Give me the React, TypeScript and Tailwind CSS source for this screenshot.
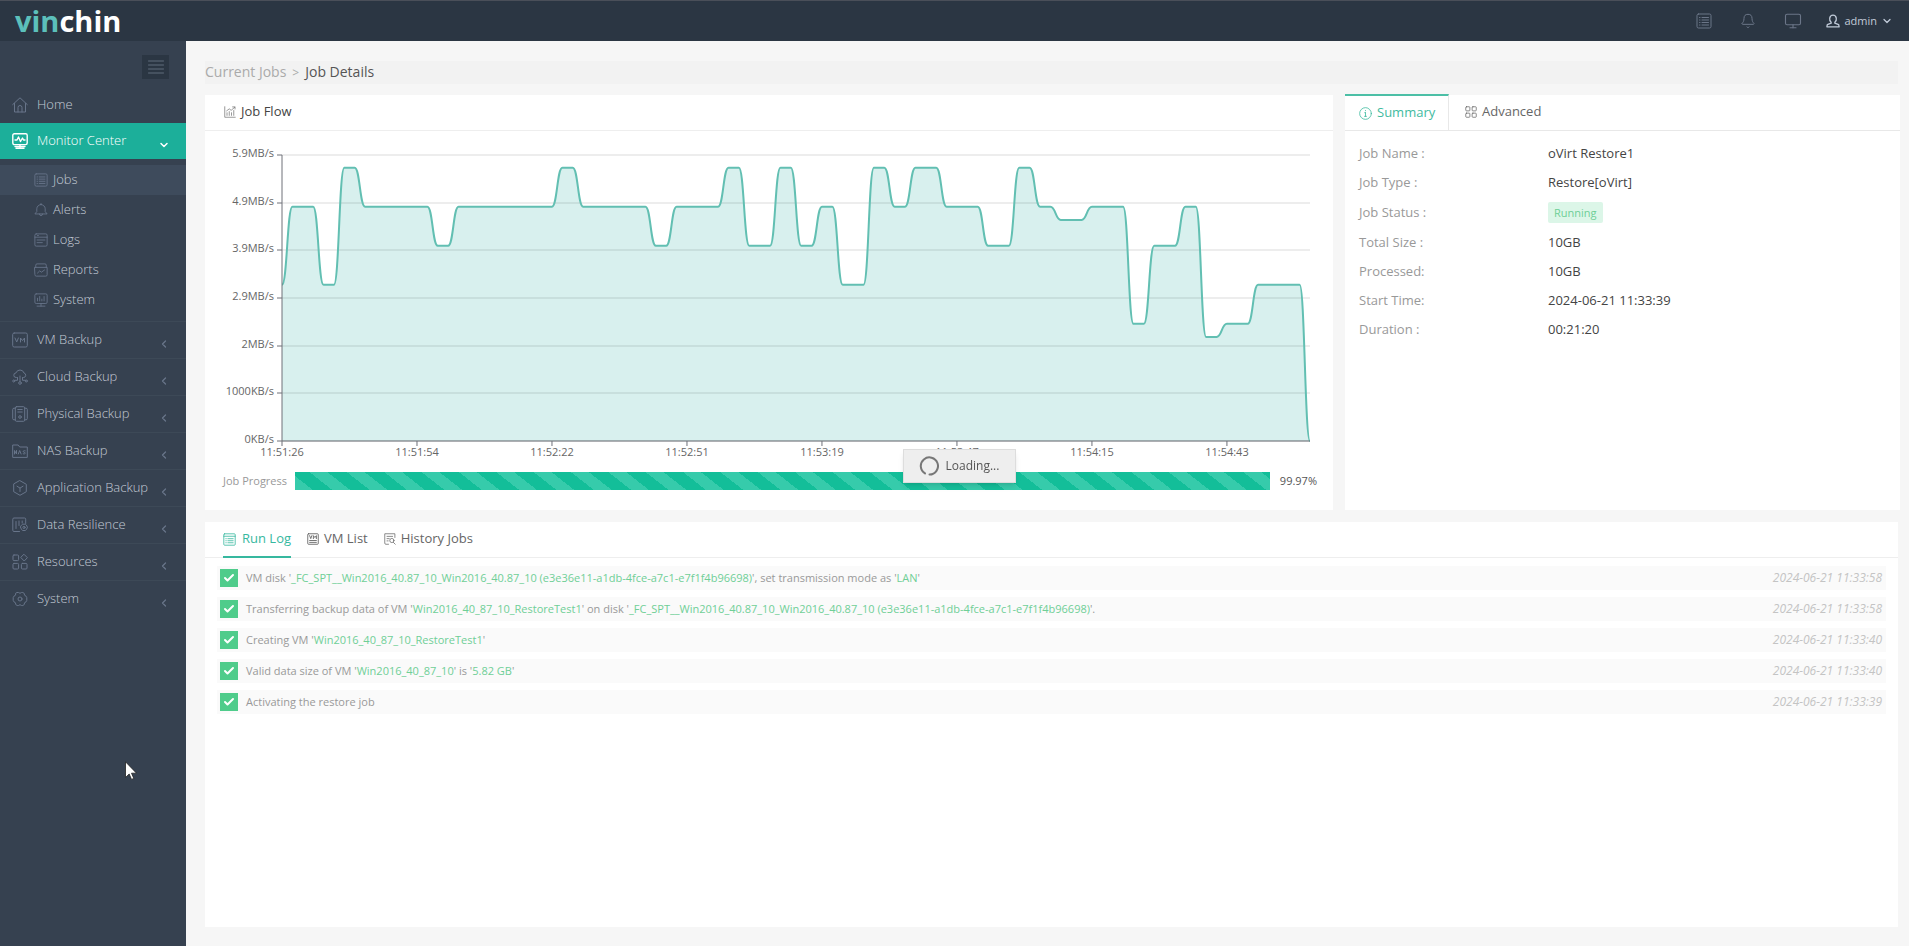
import { FC, ReactNode, SVGProps } from "react";
import { Bell, Check, ChevronDown, ChevronLeft, Monitor } from "lucide-react";

type IconProps = { className?: string };

const Svg: FC<SVGProps<SVGSVGElement>> = ({ children, ...props }) => (
  <svg
    viewBox="0 0 16 16"
    fill="none"
    stroke="currentColor"
    strokeLinecap="round"
    strokeLinejoin="round"
    aria-hidden="true"
    {...props}
  >
    {children}
  </svg>
);

const HomeIcon: FC<IconProps> = ({ className }) => (
  <Svg className={className}>
    <path d="M.7 7.600 8 .8l7.300 6.800M2.500 6.500V15h11V6.500M6 15v-4.500a2 2 0 0 1 4 0V15" />
  </Svg>
);

const MonitorCenterIcon: FC<IconProps> = ({ className }) => (
  <Svg className={className} strokeWidth="1.400">
    <rect x=".8" y=".8" width="14.400" height="10.800" rx="1.500" />
    <path d="M3 7h2l1.500-3 2 4.500L10.500 5l1 2H13M8 11.600V14M3 13.500h10M4 15.200h8" />
  </Svg>
);

const ListIcon: FC<IconProps> = ({ className }) => (
  <Svg className={className}>
    <rect x="1" y="1" width="14" height="14" rx="1.500" />
    <path d="M3.500 4.500h.5M6 4.500h6.500M3.500 7h.5M6 7h6.500M3.500 9.500h.5M6 9.500h6.500M3.500 12h.5M6 12h6.500" />
  </Svg>
);

const AlertIcon: FC<IconProps> = ({ className }) => (
  <Svg className={className}>
    <path d="M8 1.800a4.800 4.800 0 0 0-4.800 4.800v3.200L1 12.500h14l-2.200-2.700V6.600A4.800 4.800 0 0 0 8 1.800ZM8 .6v1.200M6.200 12.600a1.800 1.800 0 0 0 3.600 0" />
  </Svg>
);

const LogIcon: FC<IconProps> = ({ className }) => (
  <Svg className={className}>
    <rect x="1" y="1" width="14" height="14" rx="1.500" />
    <path d="M1 4.800h14M4 2.900h1M3.500 8h9M3.500 11h6" />
  </Svg>
);

const ReportIcon: FC<IconProps> = ({ className }) => (
  <Svg className={className}>
    <path d="M1 5h14v8.500a1.500 1.500 0 0 1-1.500 1.500h-11A1.500 1.500 0 0 1 1 13.500ZM2 5V2.500A1.500 1.500 0 0 1 3.500 1h9A1.500 1.500 0 0 1 14 2.500V5M4 11.500 6.500 9l2 1.500L12 8" />
  </Svg>
);

const SystemMonitorIcon: FC<IconProps> = ({ className }) => (
  <Svg className={className}>
    <rect x="1" y="1" width="14" height="11" rx="1.500" />
    <path d="M4 9V6M6.500 9V4M9 9V7M11.500 9V4M8 12v3M3.500 15h9" />
  </Svg>
);

const VmIcon: FC<IconProps> = ({ className }) => (
  <Svg className={className}>
    <rect x=".7" y="1" width="14.600" height="14" rx="1.500" />
    <path d="m3 6 1.700 4L6.400 6M8.500 10V6l2 2.600 2-2.600v4" />
  </Svg>
);

const CloudIcon: FC<IconProps> = ({ className }) => (
  <Svg className={className}>
    <path d="M4.500 8.500H4.200a2.300 2.300 0 0 1-.2-4.600A4.200 4.200 0 0 1 12 4a2.300 2.300 0 0 1-.2 4.500h-.3M8 7v5.500M5.500 8.500v2.800H2.800M10.500 8.500v2.800h2.700" />
    <circle cx="8" cy="14" r="1.300" />
    <circle cx="1.700" cy="12" r="1" />
    <circle cx="14.300" cy="12" r="1" />
  </Svg>
);

const PhysicalIcon: FC<IconProps> = ({ className }) => (
  <Svg className={className}>
    <rect x="3.300" y=".7" width="9.400" height="14.600" rx="1.200" />
    <path d="M3.300 2.200H2A1.300 1.300 0 0 0 .7 3.500v9A1.300 1.300 0 0 0 2 13.800h1.300M12.700 2.200H14a1.300 1.300 0 0 1 1.300 1.300v9a1.300 1.300 0 0 1-1.300 1.300h-1.300M5.800 3.500h4.400M5.800 6h4.400" />
    <circle cx="8" cy="11" r="1.300" />
  </Svg>
);

const NasIcon: FC<IconProps> = ({ className }) => (
  <Svg className={className}>
    <path d="M.7 14V2h5.500l1.500 2h7.600v10Z" />
    <path d="M2.500 11V7.500l2 3.500V7.500M6.300 11 7.700 7.500 9.100 11M13.200 7.800c-2.500-.8-2.500 1.400-1 1.500 2 .2 1.300 2.300-1 1.500" />
  </Svg>
);

const AppIcon: FC<IconProps> = ({ className }) => (
  <Svg className={className}>
    <path d="m8 .7 6.300 3.600v7.400L8 15.300l-6.300-3.600V4.300ZM5 6.200l3 1.900 3-1.900M8 8.100v3.400" />
  </Svg>
);

const ResilienceIcon: FC<IconProps> = ({ className }) => (
  <Svg className={className}>
    <path d="M7.500 14.500H2A1.200 1.200 0 0 1 .8 13.300V2.200A1.200 1.200 0 0 1 2 1h10.500a1.200 1.200 0 0 1 1.200 1.200V6.500M4 4.500v7M7 4v4.500M10.200 4v2" />
    <path d="m9.700 8 1-.8h2.600l1 .8 1.200 2.300-1.200 2.400-1 .8h-2.600l-1-.8-1.200-2.400Z" />
    <circle cx="12" cy="10.400" r="1.100" />
  </Svg>
);

const ResourcesIcon: FC<IconProps> = ({ className }) => (
  <Svg className={className}>
    <rect x="1" y="1" width="5.600" height="5.600" rx="1" />
    <rect x="9.400" y="9.400" width="5.600" height="5.600" rx="1" />
    <rect x="1" y="9.400" width="5.600" height="5.600" rx="1" />
    <path d="m12.200.5 3.200 3.200L12.200 7 9 3.700Z" />
  </Svg>
);

const GearIcon: FC<IconProps> = ({ className }) => (
  <Svg className={className}>
    <path d="M5.200 1.500h1.300L8 2.300l1.500-.8h1.300l1.500 1 .2 1.700 1.500.9.800 1.500v2.800l-.8 1.500-1.500.9-.2 1.700-1.500 1H9.500L8 13.700l-1.500.8H5.200l-1.500-1-.2-1.700-1.500-.9-.8-1.500V6.600L2 5.100l1.500-.9.200-1.700Z" />
    <circle cx="8" cy="8" r="2" />
  </Svg>
);

const UserIcon: FC<IconProps> = ({ className }) => (
  <Svg className={className} strokeWidth="1.500">
    <path d="M5.900 9.500C3.200 7.500 3.500 1.200 8 1.200s4.800 6.300 2.100 8.300v1l4.400 1.700.5 2.500H1l.5-2.500 4.400-1.700Z" />
  </Svg>
);

const FlowIcon: FC<IconProps> = ({ className }) => (
  <Svg className={className}>
    <path d="M1 1v14h14M4 12.500V9M7 12.500V7.500M10 12.500V9M13 12.500V6M3.500 6.500 7 3.800l2.500 2L14.500 1.500M11.500 1.200h3.200V4" />
  </Svg>
);

const InfoIcon: FC<IconProps> = ({ className }) => (
  <Svg className={className}>
    <circle cx="8" cy="8" r="7.200" />
    <path d="M8 7v4.500M7 7h1M6.800 11.500h2.400M8 4.300v.3" />
  </Svg>
);

const GridIcon: FC<IconProps> = ({ className }) => (
  <Svg className={className}>
    <rect x="1" y="1" width="5.500" height="5.500" rx="1" />
    <rect x="9.500" y="1" width="5.500" height="5.500" rx="1" />
    <rect x="1" y="9.500" width="5.500" height="5.500" rx="1" />
    <rect x="9.500" y="9.500" width="5.500" height="5.500" rx="1" />
  </Svg>
);

const RunLogIcon: FC<IconProps> = ({ className }) => (
  <Svg className={className}>
    <rect x="1" y="1" width="14" height="14" rx="1" />
    <path d="M1 4h14M3.500 7h.5M6 7h6.500M3.500 9.500h.5M6 9.500h6.500M3.500 12h.5M6 12h6.500" />
  </Svg>
);

const VmListIcon: FC<IconProps> = ({ className }) => (
  <Svg className={className} strokeWidth="1.200">
    <rect x="1" y="1" width="14" height="14" rx="1" />
    <path d="m3.500 3.500 1.500 4 1.500-4M8.500 7.500v-4l2 2.500 2-2.500v4M3.500 10h9M3.500 12.500h9" />
  </Svg>
);

const HistoryIcon: FC<IconProps> = ({ className }) => (
  <Svg className={className}>
    <path d="M6 15H2.500A1.500 1.500 0 0 1 1 13.500V1h13.500v5M4 4.500h7.500M4 7.500h3M4 10.500h1.500M12.500 12.500l2.500 2.500" />
    <circle cx="10.500" cy="10" r="2.800" />
  </Svg>
);

type MenuItem = { label: string; icon: FC<IconProps> };

const MONITOR_ITEMS: MenuItem[] = [
  { label: "Jobs", icon: ListIcon },
  { label: "Alerts", icon: AlertIcon },
  { label: "Logs", icon: LogIcon },
  { label: "Reports", icon: ReportIcon },
  { label: "System", icon: SystemMonitorIcon },
];

const MENU_ITEMS: MenuItem[] = [
  { label: "VM Backup", icon: VmIcon },
  { label: "Cloud Backup", icon: CloudIcon },
  { label: "Physical Backup", icon: PhysicalIcon },
  { label: "NAS Backup", icon: NasIcon },
  { label: "Application Backup", icon: AppIcon },
  { label: "Data Resilience", icon: ResilienceIcon },
  { label: "Resources", icon: ResourcesIcon },
  { label: "System", icon: GearIcon },
];

// [last sample index of the run, speed in MB/s]
const FLOW_RUNS: [number, number][] = [
  [0, 3.2], [3, 4.8], [5, 3.2], [7, 5.6], [14, 4.8], [16, 4], [26, 4.8], [28, 5.6],
  [35, 4.8], [37, 4], [42, 4.8], [44, 5.6], [47, 4], [49, 5.6], [51, 4], [53, 4.8],
  [56, 3.2], [58, 5.6], [60, 4.8], [63, 5.6], [67, 4.8], [70, 4], [72, 5.6], [74, 4.8],
  [77, 4.53], [81, 4.8], [83, 2.4], [86, 4], [88, 4.8], [90, 2.13], [93, 2.4], [98, 3.2],
  [99, 0],
];
const SAMPLES = 99;
const MAX_SPEED = 5.86;
const PLOT_HEIGHT = 286;

const Y_LABELS = ["5.9MB/s", "4.9MB/s", "3.9MB/s", "2.9MB/s", "2MB/s", "1000KB/s", "0KB/s"];
const X_LABELS = [
  "11:51:26", "11:51:54", "11:52:22", "11:52:51", "11:53:19", "11:53:47", "11:54:15", "11:54:43",
];

const toY = (speed: number) => PLOT_HEIGHT * (1 - speed / MAX_SPEED);

const flowPath = FLOW_RUNS.reduce((path, [end, speed], i) => {
  const y = toY(speed);
  if (i === 0) return `M0 ${y}`;
  const [prevEnd, prevSpeed] = FLOW_RUNS[i - 1];
  const mid = prevEnd + 0.5;
  return `${path} C${mid} ${toY(prevSpeed)} ${mid} ${y} ${prevEnd + 1} ${y} H${end}`;
}, "");

const SUMMARY = [
  ["Job Name :", "oVirt Restore1"],
  ["Job Type :", "Restore[oVirt]"],
  ["Job Status :", "Running"],
  ["Total Size :", "10GB"],
  ["Processed:", "10GB"],
  ["Start Time:", "2024-06-21 11:33:39"],
  ["Duration :", "00:21:20"],
];

const Mark: FC<{ children: ReactNode }> = ({ children }) => (
  <span className="text-[#6fcf97]">{children}</span>
);

const DISK = "_FC_SPT__Win2016_40.87_10_Win2016_40.87_10 (e3e36e11-a1db-4fce-a7c1-e7f1f4b96698)";

const LOGS: { message: ReactNode; time: string }[] = [
  {
    message: <>VM disk '<Mark>{DISK}</Mark>', set transmission mode as '<Mark>LAN</Mark>'</>,
    time: "2024-06-21 11:33:58",
  },
  {
    message: (
      <>Transferring backup data of VM '<Mark>Win2016_40_87_10_RestoreTest1</Mark>' on disk '<Mark>{DISK}</Mark>'.</>
    ),
    time: "2024-06-21 11:33:58",
  },
  {
    message: <>Creating VM '<Mark>Win2016_40_87_10_RestoreTest1</Mark>'</>,
    time: "2024-06-21 11:33:40",
  },
  {
    message: <>Valid data size of VM '<Mark>Win2016_40_87_10</Mark>' is '<Mark>5.82 GB</Mark>'</>,
    time: "2024-06-21 11:33:40",
  },
  { message: "Activating the restore job", time: "2024-06-21 11:33:39" },
];

const Header: FC = () => (
  <header className="flex h-[41px] items-center justify-between border-t border-[#4a4f59] bg-[#2b3643] pl-[15px] pr-4">
    <a href="#" className="text-[29px] font-bold leading-8 text-white">
      <span className="text-[#5cc0bb]">vin</span>chin
    </a>
    <div className="flex items-center text-[#6b7688]">
      <button type="button" aria-label="Tasks">
        <ListIcon className="size-4" />
      </button>
      <button type="button" aria-label="Notifications" className="ml-7">
        <Bell className="size-4" strokeWidth={1.5} />
      </button>
      <button type="button" aria-label="Console" className="ml-7">
        <Monitor className="size-[18px]" strokeWidth={1.5} />
      </button>
      <button type="button" className="ml-6 flex items-center gap-1 text-[11px] text-[#c0cad8]">
        <UserIcon className="size-[14px]" />
        admin
        <ChevronDown className="size-3" strokeWidth={2.5} />
      </button>
    </div>
  </header>
);

const Sidebar: FC = () => (
  <nav className="w-[186px] shrink-0 whitespace-nowrap bg-[#364150] text-[13px] font-light text-[#c3cad5]">
    <div className="flex h-[46px] items-end justify-end pb-2 pr-[17px]">
      <button
        type="button"
        aria-label="Toggle menu"
        className="flex h-6 w-[27px] items-center justify-center bg-[#2b3643] text-[#606c7d]"
      >
        <Svg className="size-4">
          <path d="M.5 2h15M.5 6h15M.5 10h15M.5 14h15" />
        </Svg>
      </button>
    </div>
    <a href="#" className="flex h-9 items-center gap-[9px] pl-3">
      <HomeIcon className="size-4 text-[#68758a]" />
      Home
    </a>
    <a href="#" className="flex h-9 items-center gap-[9px] bg-[#1caf9a] pl-3 pr-4 text-white">
      <MonitorCenterIcon className="size-4" />
      <span className="flex-1">Monitor Center</span>
      <ChevronDown className="mt-2 size-3" strokeWidth={3} />
    </a>
    <div className="py-[6px]">
      {MONITOR_ITEMS.map(({ label, icon: Icon }, i) => (
        <a
          key={label}
          href="#"
          className={`flex h-[30px] items-center gap-[5px] pl-[34px] ${i === 0 ? "bg-[#3e4b5c]" : ""}`}
        >
          <Icon className="size-[14px] text-[#68758a]" />
          {label}
        </a>
      ))}
    </div>
    {MENU_ITEMS.map(({ label, icon: Icon }) => (
      <a
        key={label}
        href="#"
        className="flex h-[37px] items-center gap-[9px] border-t border-[#3d4957] pl-3 pr-4"
      >
        <Icon className="size-4 text-[#68758a]" />
        <span className="flex-1">{label}</span>
        <ChevronLeft className="mt-2 size-3 text-[#68758a]" strokeWidth={2.5} />
      </a>
    ))}
  </nav>
);

const FlowChart: FC = () => (
  <svg className="block h-[310px] w-full overflow-visible text-[11px]" role="img" aria-label="Job flow">
    <svg
      width="100%"
      height={PLOT_HEIGHT}
      viewBox={`0 0 ${SAMPLES} ${PLOT_HEIGHT}`}
      preserveAspectRatio="none"
    >
      <path d={`${flowPath} H0 Z`} fill="#d8f0ee" />
    </svg>
    {Y_LABELS.map((label, i) => {
      const y = Math.round((i * PLOT_HEIGHT) / (Y_LABELS.length - 1));
      return (
        <g key={label}>
          <line x2="100%" y1={y} y2={y} stroke="#000" strokeOpacity=".14" />
          <line x1="-5" x2="0" y1={y} y2={y} stroke="#6e7079" />
          <text x="-8" y={y + 2} textAnchor="end" fill="#666">
            {label}
          </text>
        </g>
      );
    })}
    <svg
      width="100%"
      height={PLOT_HEIGHT}
      viewBox={`0 0 ${SAMPLES} ${PLOT_HEIGHT}`}
      preserveAspectRatio="none"
      className="overflow-visible"
    >
      <path d={flowPath} fill="none" stroke="#62bfb2" strokeWidth="2" vectorEffect="non-scaling-stroke" />
    </svg>
    <line y2={PLOT_HEIGHT} stroke="#6e7079" />
    <line x2="100%" y1={PLOT_HEIGHT} y2={PLOT_HEIGHT} stroke="#6e7079" />
    {X_LABELS.map((label, i) => {
      const x = `${(i * 1300) / SAMPLES}%`;
      return (
        <g key={label}>
          <line x1={x} x2={x} y1={PLOT_HEIGHT} y2={PLOT_HEIGHT + 5} stroke="#6e7079" />
          <text x={x} y={PLOT_HEIGHT + 15} textAnchor="middle" fill="#666">
            {label}
          </text>
        </g>
      );
    })}
  </svg>
);

const JobFlow: FC = () => (
  <section className="min-w-0 flex-1 bg-white">
    <h2 className="flex h-9 items-center gap-[5px] border-b border-[#eee] pb-[2px] pl-[19px] text-[13px] text-[#444]">
      <FlowIcon className="size-3 text-[#777]" />
      Job Flow
    </h2>
    <div className="pl-[77px] pr-[23px] pt-6">
      <FlowChart />
    </div>
    <div className="flex items-center gap-[7px] pl-[18px] pr-4 pt-[7px] text-[11px]">
      <span id="progress-label" className="w-[65px] whitespace-nowrap text-[#999]">Job Progress</span>
      <div
        role="progressbar"
        aria-labelledby="progress-label"
        aria-valuenow={99.97}
        className="h-[18px] flex-1 bg-[repeating-linear-gradient(38deg,#36cbab_0,#36cbab_11px,#13be99_11px,#13be99_23px)]"
      />
      <span className="w-10 text-right text-[#555]">99.97%</span>
    </div>
  </section>
);

const Summary: FC = () => (
  <section className="w-[555px] shrink-0 bg-white text-[13px]">
    <div className="flex h-9 border-b border-[#e8e8e8] text-[#666]">
      <button
        type="button"
        className="-mt-px flex w-[104px] items-center gap-[5px] border-r border-t-2 border-r-[#e8e8e8] border-t-[#4cbfa6] pl-[14px] text-[#3fbb9f]"
      >
        <InfoIcon className="size-[13px]" />
        Summary
      </button>
      <button type="button" className="flex items-center gap-[5px] px-4 pb-[2px]">
        <GridIcon className="size-3" />
        Advanced
      </button>
    </div>
    <dl className="flex flex-col pl-[14px] pt-2 text-[13px]">
      {SUMMARY.map(([label, value]) => (
        <div key={label} className="flex min-h-[29px] items-center">
          <dt className="w-[189px] text-[#999]">{label}</dt>
          <dd className="text-[#444]">
            {value === "Running" ? (
              <span className="my-[5px] block rounded-[2px] bg-[#dcf6e8] px-[6px] text-[11px] leading-[21px] text-[#6fcf97]">
                {value}
              </span>
            ) : (
              value
            )}
          </dd>
        </div>
      ))}
    </dl>
  </section>
);

const RunLog: FC = () => (
  <section className="mr-[11px] mt-3 min-h-[405px] bg-white">
    <div className="flex h-9 gap-4 border-b border-[#eee] pl-[18px] text-[13px] text-[#666]">
      <button
        type="button"
        className="-mb-px flex items-center gap-[6px] border-b-2 border-[#36b89f] text-[#36b89f]"
      >
        <RunLogIcon className="size-[13px]" />
        Run Log
      </button>
      <button type="button" className="flex items-center gap-[5px] pb-[2px]">
        <VmListIcon className="size-3" />
        VM List
      </button>
      <button type="button" className="flex items-center gap-[5px] pb-[2px]">
        <HistoryIcon className="size-3" />
        History Jobs
      </button>
    </div>
    <ul className="flex flex-col gap-[7px] px-3 pt-2 text-[11px] text-[#999]">
      {LOGS.map(({ message, time }, i) => (
        <li key={i} className="flex h-6 items-center bg-[#fafafa] pl-[3px] pr-1">
          <span className="mr-2 flex size-[18px] items-center justify-center bg-[#4fcc8b] text-white">
            <Check className="size-3" strokeWidth={4} />
          </span>
          <span className="flex-1">{message}</span>
          <time className="text-xs italic text-[#c4c4c4]">{time}</time>
        </li>
      ))}
    </ul>
  </section>
);

const Loading: FC = () => (
  <div
    role="status"
    className="fixed left-1/2 top-1/2 flex h-[34px] w-[113px] -translate-x-[52px] -translate-y-[24px] items-center gap-[7px] border border-[#ddd] bg-[#eee] pl-[15px] text-xs text-[#555] shadow-md"
  >
    <Svg className="size-5" viewBox="0 0 20 20" stroke="#777" strokeWidth="2">
      <path d="M6 17.400a8.600 8.600 0 1 1 4.500 1.200" />
    </Svg>
    Loading...
  </div>
);

const Cursor: FC = () => (
  <svg
    viewBox="0 0 12 19"
    className="pointer-events-none absolute left-[125px] top-[761px] h-[19px] w-3"
    aria-hidden="true"
  >
    <path d="M.5.800v15.700l3.700-3.500 2.300 5.400 2.300-1-2.300-5.200h5Z" fill="#fff" stroke="#222" strokeWidth=".8" />
  </svg>
);

const App: FC = () => (
  <div className="relative flex min-h-screen flex-col bg-[#f6f6f6] font-['Open_Sans',sans-serif]">
    <Header />
    <div className="flex flex-1">
      <Sidebar />
      <main className="min-w-0 flex-1 pb-5 pl-[19px] pt-5">
        <div className="mr-[11px] h-[23px] bg-[#f2f2f2] text-sm leading-[21px] text-[#aaa]">
          <a href="#">Current Jobs</a>
          <span className="mx-[6px] text-xs">&gt;</span>
          <span className="text-[#555]">Job Details</span>
        </div>
        <div className="mr-[9px] mt-[11px] flex min-h-[415px] gap-3">
          <JobFlow />
          <Summary />
        </div>
        <RunLog />
      </main>
    </div>
    <Cursor />
    <Loading />
  </div>
);

export default App;
